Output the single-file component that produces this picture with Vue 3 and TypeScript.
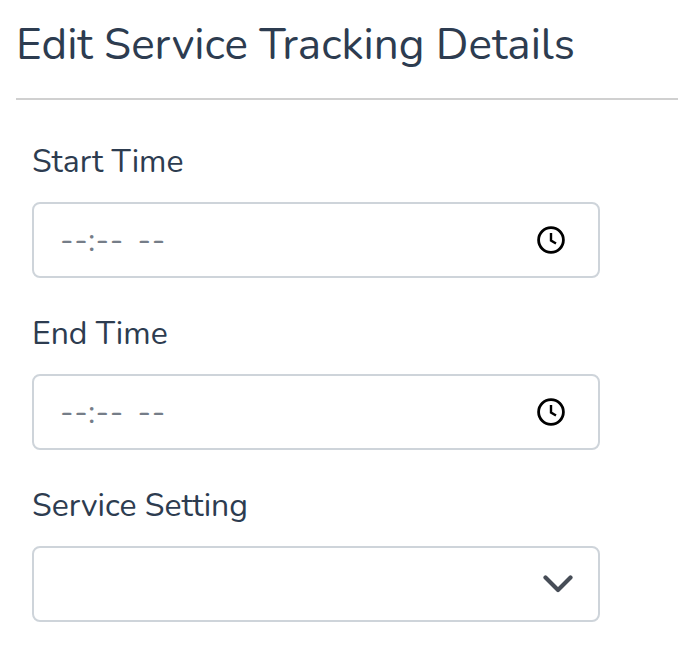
<script setup lang="ts">
const times = ['Start Time', 'End Time']
</script>

<template>
  <div class="page">
    <h1 class="title">Edit Service Tracking Details</h1>
    <hr class="rule" />
    <form class="form">
      <div v-for="label in times" :key="label" class="field">
        <label class="label">{{ label }}</label>
        <div class="control">
          <span class="placeholder">--:-- --</span>
          <svg class="clock" viewBox="0 0 30 30" width="30" height="30" fill="none" stroke="#000">
            <circle cx="15" cy="15" r="12.4" stroke-width="2.8" />
            <path d="M15 8V15.5L20 18.5" stroke-width="2.4" />
          </svg>
        </div>
      </div>
      <div class="field">
        <label class="label">Service Setting</label>
        <div class="control select">
          <span></span>
          <svg class="chev" viewBox="0 0 30 18" width="30" height="18" fill="none" stroke="#474d57">
            <path d="M2.5 2.5L15 15L27.5 2.5" stroke-width="4.2" stroke-linecap="round" stroke-linejoin="round" />
          </svg>
        </div>
      </div>
    </form>
  </div>
</template>

<style scoped>
.page {
  width: 678px;
  height: 668px;
  padding: 17px 0 0 16px;
  box-sizing: border-box;
  background: #fff;
  font-family: "Nunito", "Noto Sans", sans-serif;
  color: #2d3c50;
  overflow: hidden;
}
.title {
  margin: 0;
  font-size: 44px;
  line-height: 56px;
  font-weight: 400;
}
.rule {
  margin: 25px 0 0;
  border: 0;
  border-top: 2px solid #d0d0d0;
}
.form {
  padding: 38px 0 0 16px;
  width: 568px;
  display: flex;
  flex-direction: column;
  gap: 32px;
}
.label {
  display: block;
  font-size: 32px;
  line-height: 48px;
  margin-bottom: 16px;
}
.control {
  height: 76px;
  box-sizing: border-box;
  border: 2px solid #ced4da;
  border-radius: 8px;
  padding: 0 32px 0 26px;
  display: flex;
  align-items: center;
  justify-content: space-between;
}
.select {
  padding-right: 25px;
}
.placeholder {
  font-size: 32px;
  letter-spacing: 0.7px;
  word-spacing: 4.5px;
  color: #757d88;
}
</style>
